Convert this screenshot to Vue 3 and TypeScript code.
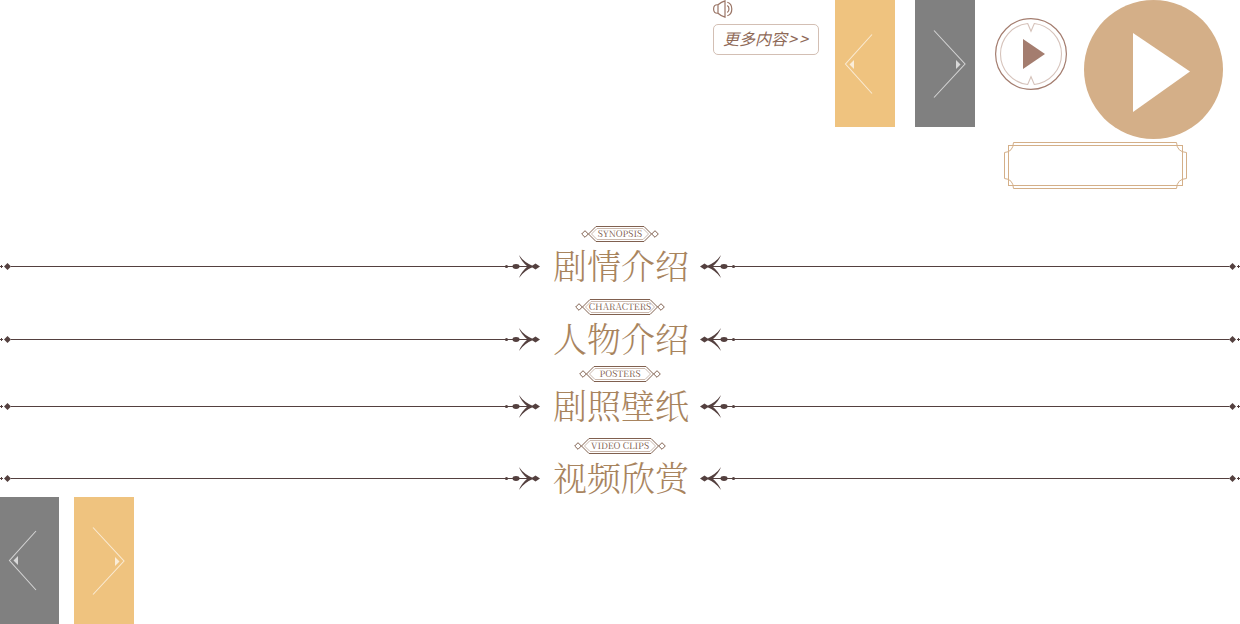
<script setup lang="ts">
interface Section {
  id: string
  title: string
  label: string
  badge: number
}

const sections: Section[] = [
  { id: 'synopsis', title: '剧情介绍', label: 'SYNOPSIS', badge: 78 },
  { id: 'characters', title: '人物介绍', label: 'CHARACTERS', badge: 90 },
  { id: 'posters', title: '剧照壁纸', label: 'POSTERS', badge: 82 },
  { id: 'clips', title: '视频欣赏', label: 'VIDEO CLIPS', badge: 92 },
]

const outerHex = (w: number) =>
  `7.5,8 15,.5 ${w - 15},.5 ${w - 7.5},8 ${w - 15},15.5 15,15.5`
const innerHex = (w: number) =>
  `10.5,8 16,2.5 ${w - 16},2.5 ${w - 10.5},8 ${w - 16},13.5 16,13.5`
</script>

<template>
  <div class="page">
    <header class="top">
      <div class="tools">
        <button class="plain sound" type="button" aria-label="声音">
          <svg width="20" height="18" viewBox="0 0 20 18">
            <path d="M12 .8V17.2C9 16.4 7 15 5 13.2C2 13.6 .6 12 .6 9S2 4.4 5 4.8C7 3 9 1.6 12 .8ZM5 4.8V13.2" />
            <path d="M14.3 5.6C16.5 7 16.5 11 14.3 12.4M14.3 2.2C20.3 4 20.3 14 14.3 15.8" />
          </svg>
        </button>
        <a class="more" href="#synopsis">更多内容<span>&gt;</span><span>&gt;</span></a>
      </div>
      <div class="pager wide">
        <button class="plain nav gold" type="button" aria-label="上一页">
          <svg width="60" height="127" viewBox="0 0 60 127">
            <path class="chev" d="M37 34.5L10.5 64L37 93.5" />
            <path class="tip" d="M19 60V69L14.5 64.5Z" />
          </svg>
        </button>
        <button class="plain nav grey" type="button" aria-label="下一页">
          <svg width="60" height="127" viewBox="0 0 60 127">
            <path class="chev" d="M19 30.5L50 64L19 97.5" />
            <path class="tip" d="M41 60V69L45.5 64.5Z" />
          </svg>
        </button>
      </div>
      <div class="media">
        <div class="plays">
          <button class="plain" type="button" aria-label="播放">
            <svg width="72" height="72" viewBox="0 0 72 72">
              <circle cx="36" cy="36" r="35.4" fill="none" stroke="#a47d6f" stroke-width="1.2" />
              <path
                d="M32.7 5.5L36 13.3L39.3 5.5A30.7 30.7 0 0 1 39.3 66.5L36 58.7L32.7 66.5A30.7 30.7 0 0 1 32.7 5.5Z"
                fill="none" stroke="#d6c3bb" stroke-width="1.1"
              />
              <path d="M28 21L50 36L28 51Z" fill="#a47d6f" />
            </svg>
          </button>
          <button class="plain" type="button" aria-label="播放视频">
            <svg width="139" height="139" viewBox="0 0 139 139">
              <circle cx="69.5" cy="69.5" r="69.5" fill="#d4af88" />
              <path d="M49 33L106 71.5L49 112Z" fill="#fff" />
            </svg>
          </button>
        </div>
        <button class="plain frame" type="button" aria-label="查看">
          <svg width="183" height="47" viewBox="0 0 183 47">
            <rect x="4.5" y="3.5" width="174" height="40" />
            <path d="M9.5 .5H172.5Q173 10 182.5 10.5V36.5Q173 37 172.5 46.5H9.5Q9 37 .5 36.5V10.5Q9 10 9.5 .5Z" />
          </svg>
        </button>
      </div>
    </header>

    <main>
      <section v-for="s in sections" :id="s.id" :key="s.id" :class="['section', s.id]">
        <div class="rule">
          <svg class="cap" width="11" height="24" viewBox="0 0 11 24">
            <path d="M0 12.5H3M1.5 11V14" stroke="#54403f" />
            <path d="M7.5 9L11 12.5L7.5 16L4 12.5Z" />
          </svg>
          <i class="line"></i>
          <svg class="arrow" width="36" height="24" viewBox="0 0 36 24">
            <path d="M0 12.5H34" stroke="#54403f" />
            <circle cx="2.5" cy="12.5" r="1.6" />
            <ellipse cx="12" cy="12.5" rx="3.5" ry="2.4" />
            <path d="M15 1Q20 8.5 30 12.5Q20 16.5 15 24Q17 18 23.5 12.5Q17 7 15 1Z" />
            <path d="M27 12.5L31.5 9.5L36 12.5L31.5 15.5Z" />
          </svg>
        </div>
        <div class="heading">
          <p class="badge">
            <svg :width="s.badge" height="16" :viewBox="`0 0 ${s.badge} 16`">
              <polygon class="inner" :points="innerHex(s.badge)" />
              <polygon :points="outerHex(s.badge)" />
              <polygon points="4,4.7 7.3,8 4,11.3 .7,8" />
              <polygon points="4,4.7 7.3,8 4,11.3 .7,8" :transform="`translate(${s.badge - 8} 0)`" />
            </svg>
            <span>{{ s.label }}</span>
          </p>
          <h2>{{ s.title }}</h2>
        </div>
        <div class="rule flip">
          <svg class="cap" width="11" height="24" viewBox="0 0 11 24">
            <path d="M0 12.5H3M1.5 11V14" stroke="#54403f" />
            <path d="M7.5 9L11 12.5L7.5 16L4 12.5Z" />
          </svg>
          <i class="line"></i>
          <svg class="arrow" width="36" height="24" viewBox="0 0 36 24">
            <path d="M0 12.5H34" stroke="#54403f" />
            <circle cx="2.5" cy="12.5" r="1.6" />
            <ellipse cx="12" cy="12.5" rx="3.5" ry="2.4" />
            <path d="M15 1Q20 8.5 30 12.5Q20 16.5 15 24Q17 18 23.5 12.5Q17 7 15 1Z" />
            <path d="M27 12.5L31.5 9.5L36 12.5L31.5 15.5Z" />
          </svg>
        </div>
      </section>
    </main>

    <footer class="pager">
      <button class="plain nav grey" type="button" aria-label="上一组">
        <svg width="59" height="127" viewBox="1 0 59 127">
          <path class="chev" d="M37 34L10.5 63.5L37 93" />
          <path class="tip" d="M19 59V68L14.5 63.5Z" />
        </svg>
      </button>
      <button class="plain nav gold" type="button" aria-label="下一组">
        <svg width="60" height="127" viewBox="0 0 60 127">
          <path class="chev" d="M19 30.5L50 64L19 97.5" />
          <path class="tip" d="M41 60V69L45.5 64.5Z" />
        </svg>
      </button>
    </footer>
  </div>
</template>

<style>
body {
  margin: 0;
  background: #fff;
}
</style>

<style scoped>
.page {
  font-family: "Liberation Sans", "Noto Sans CJK SC", sans-serif;
}
svg {
  display: block;
}
.plain {
  display: block;
  padding: 0;
  border: 0;
  background: none;
  cursor: pointer;
}
.top {
  display: flex;
  justify-content: flex-end;
  align-items: flex-start;
  padding-right: 17px;
}
.tools {
  display: flex;
  flex-direction: column;
  align-items: flex-start;
  gap: 6px;
  margin-right: 16px;
}
.sound svg {
  fill: none;
  stroke: #9a7566;
  stroke-width: 1.2;
}
.more {
  box-sizing: border-box;
  padding: 0 9px 2px;
  border: 1px solid #d3bfb4;
  border-radius: 5px;
  color: #8f6a58;
  font-family: "Noto Sans CJK SC", sans-serif;
  font-size: 16px;
  font-style: italic;
  line-height: 27px;
  text-decoration: none;
  white-space: nowrap;
}
.more span {
  display: inline-block;
  width: 11px;
  text-align: center;
}
.pager {
  display: flex;
  gap: 15px;
}
.pager.wide {
  gap: 20px;
  margin-right: 20px;
}
.plain.gold {
  background: #efc37f;
}
.plain.grey {
  background: #808080;
}
.chev {
  fill: none;
  stroke: #fff;
  stroke-opacity: 0.65;
  stroke-width: 1.1;
}
.tip {
  fill: #fff;
  fill-opacity: 0.7;
}
.plays {
  display: flex;
  align-items: flex-start;
  gap: 17px;
}
.plays button:first-child {
  margin-top: 18px;
}
.frame {
  margin: 3px 0 0 9px;
}
.frame svg {
  fill: none;
  stroke: #d4af88;
}
main {
  padding: 37px 0 2px;
}
.section {
  display: grid;
  grid-template-columns: 1fr 160px 1fr;
}
.characters {
  margin-top: 16px;
}
.posters {
  margin-top: 10px;
}
.clips {
  margin-top: 15px;
}
.rule {
  display: flex;
  align-items: center;
  height: 24px;
  margin-top: 28px;
}
.rule svg {
  flex: none;
  fill: #54403f;
}
.line {
  flex: 1;
  height: 1px;
  margin-top: 1px;
  background: #54403f;
}
.flip {
  transform: scaleX(-1);
}
.heading {
  display: flex;
  flex-direction: column;
  align-items: center;
  gap: 5px;
}
.badge {
  display: grid;
  place-items: center;
  margin: 0;
}
.badge > * {
  grid-area: 1 / 1;
}
.badge svg {
  fill: none;
  stroke: #80604f;
}
.badge .inner {
  stroke: #cbb9ae;
}
.badge span {
  color: #7a5848;
  font: 9px/16px "Noto Serif CJK SC", "Liberation Serif", serif;
  white-space: nowrap;
}
h2 {
  margin: 0;
  padding-left: 2px;
  color: #a8845e;
  font: 300 34px/36px "Noto Serif CJK SC", "Source Han Serif SC", "Songti SC", "Noto Sans CJK SC", serif;
  white-space: nowrap;
}
</style>
